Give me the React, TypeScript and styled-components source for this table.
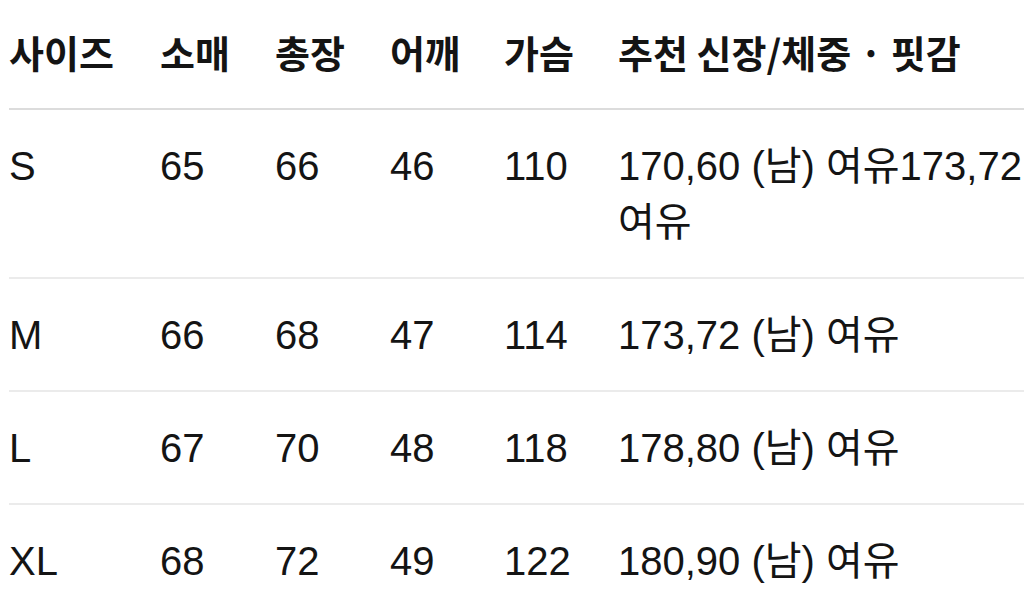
import React from "react";
import styled, { createGlobalStyle } from "styled-components";

const GlobalStyle = createGlobalStyle`
  html, body {
    margin: 0;
    padding: 0;
    background: #ffffff;
  }
  body {
    font-family: "Liberation Sans", "Noto Sans CJK KR", sans-serif;
    color: #141414;
    overflow: hidden;
  }
`;

interface SizeRow {
  size: string;
  sleeve: string;
  length: string;
  shoulder: string;
  chest: string;
  fit: string[];
}

const headers = ["사이즈", "소매", "총장", "어깨", "가슴", "추천 신장/체중 · 핏감"];

const rows: SizeRow[] = [
  { size: "S", sleeve: "65", length: "66", shoulder: "46", chest: "110", fit: ["170,60 (남) 여유173,72", "여유"] },
  { size: "M", sleeve: "66", length: "68", shoulder: "47", chest: "114", fit: ["173,72 (남) 여유"] },
  { size: "L", sleeve: "67", length: "70", shoulder: "48", chest: "118", fit: ["178,80 (남) 여유"] },
  { size: "XL", sleeve: "68", length: "72", shoulder: "49", chest: "122", fit: ["180,90 (남) 여유"] },
];

function App() {
  return (
    <>
      <GlobalStyle />
      <Table>
        <HeadRow>
          {headers.map((h) => (
            <HeadCell key={h}>{h}</HeadCell>
          ))}
        </HeadRow>
        {rows.map((r) => (
          <Row key={r.size}>
            <Cell>{r.size}</Cell>
            <Cell>{r.sleeve}</Cell>
            <Cell>{r.length}</Cell>
            <Cell>{r.shoulder}</Cell>
            <Cell>{r.chest}</Cell>
            <Cell>
              {r.fit.map((line) => (
                <Line key={line}>{line}</Line>
              ))}
            </Cell>
          </Row>
        ))}
      </Table>
    </>
  );
}

export default App;

const Table = styled.div`
  margin-left: 9px;
  display: flex;
  flex-direction: column;
`;

const columns = "151px 115px 115px 114px 114px 1fr";

const HeadRow = styled.div`
  display: grid;
  grid-template-columns: ${columns};
  padding: 24px 0 28px;
  border-bottom: 2px solid #dcdcdc;
`;

const HeadCell = styled.div`
  font-family: "Noto Sans CJK KR", "Liberation Sans", sans-serif;
  font-weight: 700;
  font-size: 38px;
  line-height: 56px;
  white-space: nowrap;
  color: #141414;
`;

const Row = styled.div`
  display: grid;
  grid-template-columns: ${columns};
  padding: 28px 0 27px;
  border-bottom: 2px solid #ebebeb;
`;

const Cell = styled.div`
  font-size: 40px;
  line-height: 56px;
  white-space: nowrap;
`;

const Line = styled.div`
  white-space: nowrap;
`;
